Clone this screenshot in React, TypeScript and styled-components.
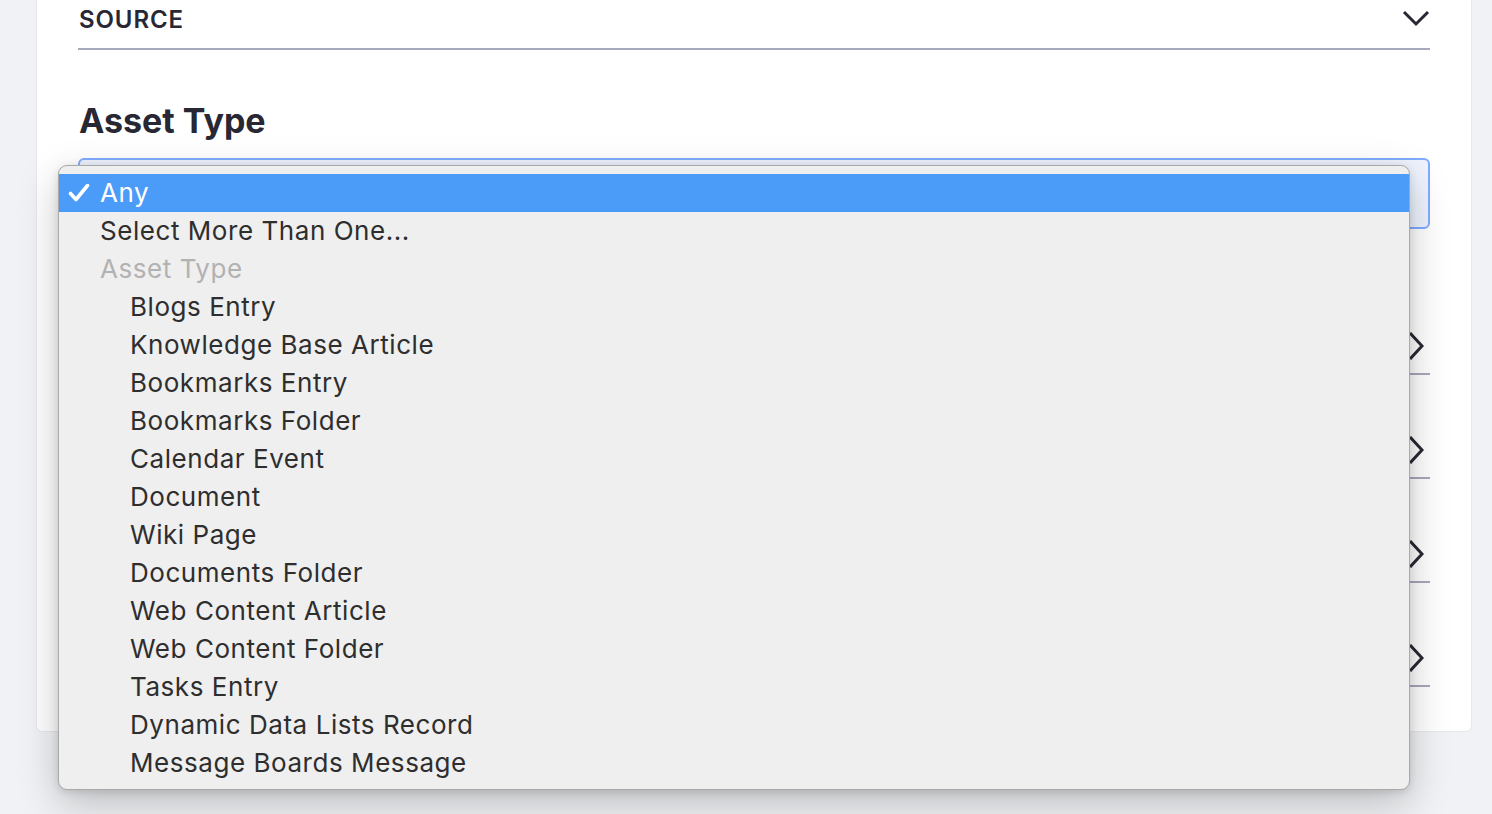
import React from 'react';
import styled, {createGlobalStyle} from 'styled-components';

const GlobalStyle = createGlobalStyle`
  html, body {
    margin: 0;
    padding: 0;
    background: #f1f2f5;
    font-family: Inter, "Liberation Sans", sans-serif;
    overflow: hidden;
  }
`;

const Page = styled.div`
  width: 1492px;
  height: 814px;
  padding-left: 36px;
  box-sizing: border-box;
`;

const Panel = styled.div`
  width: 1436px;
  height: 732px;
  box-sizing: border-box;
  background: #fff;
  border: 1px solid #e7e7ed;
  border-top: none;
  border-radius: 0 0 6px 6px;
  padding: 0 41px;
`;

const SectionHeader = styled.div<{open?: boolean; first?: boolean}>`
  display: flex;
  align-items: center;
  justify-content: space-between;
  box-sizing: border-box;
  height: ${p => (p.open ? 50 : p.first ? 146 : 104)}px;
  padding: ${p => (p.open ? '0 0 12px' : p.first ? '102px 6px 12px 0' : '60px 6px 12px 0')};
  border-bottom: 2px solid #a7a9bc;
  color: #272833;
`;

const SectionTitle = styled.span`
  font-size: 24px;
  font-weight: 600;
  letter-spacing: 0.9px;
  text-transform: uppercase;
  padding-left: 1px;
  padding-top: 2px;
`;

const Heading = styled.h2`
  margin: 51px 0 17px 1px;
  font-size: 34px;
  line-height: 40px;
  font-weight: 700;
  color: #272833;
`;

const SelectWrap = styled.div`
  position: relative;
`;

const SelectBox = styled.div`
  height: 71px;
  box-sizing: border-box;
  border: 2px solid #80acff;
  border-radius: 6px;
  background: #eef3fd;
`;

const Menu = styled.ul`
  position: absolute;
  left: -20px;
  top: 7px;
  width: 1352px;
  height: 625px;
  box-sizing: border-box;
  margin: 0;
  padding: 8px 0;
  list-style: none;
  background: #efefef;
  border: 1px solid #a9a9a9;
  border-radius: 9px;
  box-shadow: 0 14px 40px rgba(0, 0, 0, 0.22), 0 2px 8px rgba(0, 0, 0, 0.12);
  overflow: hidden;
  z-index: 10;
`;

const Option = styled.li<{selected?: boolean; disabled?: boolean; indent?: boolean}>`
  position: relative;
  height: 38px;
  display: flex;
  align-items: center;
  padding-left: ${p => (p.indent ? 71 : 41)}px;
  padding-bottom: 2px;
  box-sizing: border-box;
  font-size: 26px;
  letter-spacing: 0.55px;
  color: ${p => (p.selected ? '#fff' : p.disabled ? '#b2b2b2' : '#2e2e2e')};
  background: ${p => (p.selected ? '#4b9bf8' : 'transparent')};
`;

const Check = styled.svg`
  position: absolute;
  left: 9px;
  top: 10px;
`;

const Chevron = ({dir}: {dir: 'down' | 'right'}) =>
  dir === 'down' ? (
    <svg width="28" height="17" viewBox="0 0 28 17" fill="none">
      <path d="M2 2 L14 14 L26 2" stroke="#272833" strokeWidth="3" />
    </svg>
  ) : (
    <svg width="16" height="28" viewBox="0 0 16 28" fill="none">
      <path d="M2 1 L14 14 L2 27" stroke="#272833" strokeWidth="3" />
    </svg>
  );

const items = [
  'Blogs Entry',
  'Knowledge Base Article',
  'Bookmarks Entry',
  'Bookmarks Folder',
  'Calendar Event',
  'Document',
  'Wiki Page',
  'Documents Folder',
  'Web Content Article',
  'Web Content Folder',
  'Tasks Entry',
  'Dynamic Data Lists Record',
  'Message Boards Message',
];

// collapsed sections lying under the open menu
const sections = [0, 1, 2, 3];

export default function App() {
  return (
    <Page>
      <GlobalStyle />
      <Panel>
        <SectionHeader open>
          <SectionTitle>Source</SectionTitle>
          <Chevron dir="down" />
        </SectionHeader>
        <Heading>Asset Type</Heading>
        <SelectWrap>
          <SelectBox />
          <Menu>
            <Option selected>
              <Check width="22" height="18" viewBox="0 0 22 18" fill="none">
                <path d="M2.5 9.5 L8 15.5 L19.5 1.5" stroke="#fff" strokeWidth="3.6" strokeLinecap="round" strokeLinejoin="round" />
              </Check>
              Any
            </Option>
            <Option>Select More Than One...</Option>
            <Option disabled>Asset Type</Option>
            {items.map(it => (
              <Option indent key={it}>
                {it}
              </Option>
            ))}
          </Menu>
        </SelectWrap>
        {sections.map(i => (
          <SectionHeader key={i} first={i === 0}>
            <span />
            <Chevron dir="right" />
          </SectionHeader>
        ))}
      </Panel>
    </Page>
  );
}
